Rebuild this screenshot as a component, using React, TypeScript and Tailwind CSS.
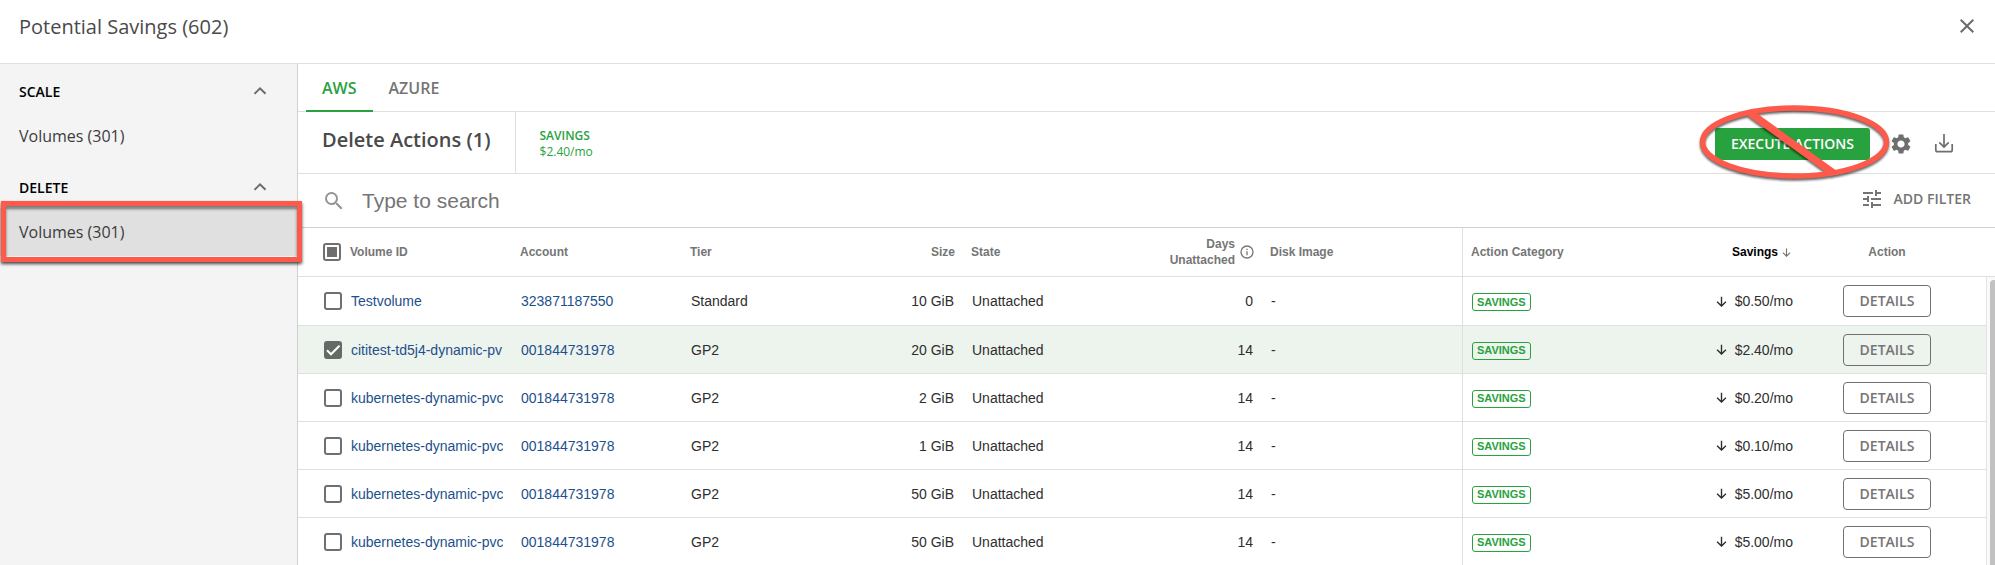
import { useState } from "react";
import { MdClose, MdSearch, MdSettings, MdTune } from "react-icons/md";

type Volume = {
  id: string;
  account: string;
  tier: string;
  size: string;
  days: number;
  savings: string;
};

const volumes: Volume[] = [
  { id: "Testvolume", account: "323871187550", tier: "Standard", size: "10 GiB", days: 0, savings: "$0.50/mo" },
  { id: "cititest-td5j4-dynamic-pv", account: "001844731978", tier: "GP2", size: "20 GiB", days: 14, savings: "$2.40/mo" },
  { id: "kubernetes-dynamic-pvc", account: "001844731978", tier: "GP2", size: "2 GiB", days: 14, savings: "$0.20/mo" },
  { id: "kubernetes-dynamic-pvc", account: "001844731978", tier: "GP2", size: "1 GiB", days: 14, savings: "$0.10/mo" },
  { id: "kubernetes-dynamic-pvc", account: "001844731978", tier: "GP2", size: "50 GiB", days: 14, savings: "$5.00/mo" },
  { id: "kubernetes-dynamic-pvc", account: "001844731978", tier: "GP2", size: "50 GiB", days: 14, savings: "$5.00/mo" },
];

function ChevronUp() {
  return (
    <svg viewBox="0 0 14 14" className="size-[14px]" fill="none" stroke="#6b6b6b" strokeWidth="2" aria-hidden="true">
      <path d="M1.500 8.800 7 3.300l5.500 5.500" />
    </svg>
  );
}

function ArrowDown({ className }: { className: string }) {
  return (
    <svg viewBox="0 0 12 12" className={className} fill="none" stroke="currentColor" strokeWidth="1.500" aria-hidden="true">
      <path d="M6 .8v10M1.200 6.200 6 11l4.800-4.800" />
    </svg>
  );
}

function Checkbox({ label, checked, mixed, onChange }: { label: string; checked: boolean; mixed?: boolean; onChange: () => void }) {
  return (
    <label className="relative block size-[18px]">
      <input
        type="checkbox"
        aria-label={label}
        checked={checked}
        onChange={onChange}
        className="block size-[18px] appearance-none rounded-[3px] border-2 border-[#707070] bg-white checked:border-[#646b66] checked:bg-[#646b66]"
      />
      {mixed && <span className="pointer-events-none absolute inset-1 bg-[#6e6e6e]" />}
      {checked && (
        <svg viewBox="0 0 18 18" className="pointer-events-none absolute inset-0" fill="none" stroke="#fff" strokeWidth="2" aria-hidden="true">
          <path d="m3 9.300 4 4L15.500 4.800" />
        </svg>
      )}
    </label>
  );
}

function SidebarSection({ title, active }: { title: string; active?: boolean }) {
  return (
    <section>
      <button type="button" className="flex h-12 w-full items-center justify-between pt-2 pr-[30px] pl-[19px] text-sm font-semibold text-black">
        {title}
        <ChevronUp />
      </button>
      <a href="#volumes" className={active ? "relative flex h-12 items-center bg-[#e0e0e0] pl-[19px] text-base" : "relative flex h-12 items-center pl-[19px] text-base"}>
        Volumes (301)
        {active && (
          <span className="pointer-events-none absolute -top-[7px] -right-[5px] -bottom-[6px] left-px z-10 border-5 border-[#fd5a4b] shadow-[0_2px_3px_rgba(0,0,0,0.7),inset_0_3px_3px_rgba(0,0,0,0.5)]" />
        )}
      </a>
    </section>
  );
}

function ProhibitedMark() {
  return (
    <svg viewBox="0 0 200 86" className="pointer-events-none absolute -top-7 -right-[26px] z-10 h-[86px] w-[200px] max-w-none drop-shadow-[0_2px_1px_rgba(0,0,0,0.6)]" fill="none" stroke="#fd5a4b" aria-hidden="true">
      <path d="M54 13 138 73.500" strokeWidth="7.500" />
      <ellipse cx="98.500" cy="42" rx="92" ry="34" strokeWidth="5.500" />
    </svg>
  );
}

export default function App() {
  const [selected, setSelected] = useState<number[]>([1]);
  const toggle = (index: number) =>
    setSelected((current) => (current.includes(index) ? current.filter((i) => i !== index) : [...current, index]));

  return (
    <div className="flex h-screen flex-col overflow-hidden bg-white font-['Open_Sans',sans-serif] text-[#3c3c3c]">
      <header className="flex h-16 shrink-0 items-start justify-between border-b border-[#dfdfdf] pt-[13px] pr-4 pl-[19px]">
        <h1 className="text-xl leading-7 text-[#4a4a4a]">Potential Savings (602)</h1>
        <button type="button" aria-label="Close" className="pt-px text-[#6b6b6b]">
          <MdClose className="size-6" />
        </button>
      </header>

      <div className="flex min-h-0 flex-1">
        <nav className="w-[298px] shrink-0 border-r border-[#cfcfcf] bg-[#f4f4f4]">
          <SidebarSection title="SCALE" />
          <SidebarSection title="DELETE" active />
        </nav>

        <main className="flex min-w-0 flex-1 flex-col">
          <div role="tablist" className="flex h-12 shrink-0 border-b border-[#dfdfdf] pl-2 text-base font-semibold">
            <button type="button" role="tab" aria-selected="true" className="-mb-px border-b-2 border-[#28a23e] px-4 pt-0.5 text-[#28a23e]">
              AWS
            </button>
            <button type="button" role="tab" aria-selected="false" className="px-4 pt-px text-[#757575]">
              AZURE
            </button>
          </div>

          <div className="flex h-[62px] shrink-0 items-stretch border-b border-[#dfdfdf] pr-[39px]">
            <h2 className="flex items-center border-r border-[#dfdfdf] pr-6 pb-1.5 pl-6 text-xl font-semibold text-[#4a4a4a]">Delete Actions (1)</h2>
            <div className="flex flex-col justify-center pt-0.5 pl-6 text-xs text-[#28a23e]">
              <span className="font-semibold">SAVINGS</span>
              <span>$2.40/mo</span>
            </div>
            <div className="ml-auto flex items-center gap-[19px] pt-0.5 text-[#6e6e6e]">
              <div className="relative">
                <button type="button" className="h-8 rounded-[3px] bg-[#28a23e] px-4 text-sm font-semibold text-white">
                  EXECUTE ACTIONS
                </button>
                <ProhibitedMark />
              </div>
              <button type="button" aria-label="Settings">
                <MdSettings className="size-6" />
              </button>
              <button type="button" aria-label="Download">
                <svg viewBox="0 0 24 24" className="size-6" fill="none" stroke="currentColor" strokeWidth="1.700" aria-hidden="true">
                  <path d="M12 2v12.500M7.300 10.300 12 15l4.700-4.700M3.800 12v6q0 1.700 1.700 1.700h13q1.700 0 1.700-1.700v-6" />
                </svg>
              </button>
            </div>
          </div>

          <div className="flex h-[54px] shrink-0 items-center border-b border-[#cfcfcf] px-6">
            <label htmlFor="search" aria-label="Search" className="text-[#949494]">
              <MdSearch className="size-6" />
            </label>
            <input
              id="search"
              type="text"
              placeholder="Type to search"
              className="ml-4 min-w-0 flex-1 font-['Liberation_Sans',sans-serif] text-[21px] outline-none placeholder:text-[#757575]"
            />
            <button type="button" className="flex items-center gap-[10px] pb-1 text-sm font-semibold text-[#757575]">
              <MdTune className="size-6" />
              ADD FILTER
            </button>
          </div>

          <div className="flex min-h-0 flex-1 overflow-hidden font-['Liberation_Sans',sans-serif]">
            <div className="min-w-0 flex-1">
              <table className="w-full table-fixed border-separate border-spacing-0 text-left text-sm text-[#2e2e2e]">
                <colgroup>
                  <col className="w-11" />
                  <col className="w-[170px]" />
                  <col className="w-[170px]" />
                  <col className="w-[170px]" />
                  <col className="w-[111px]" />
                  <col className="w-[170px]" />
                  <col className="w-[129px]" />
                  <col />
                  <col className="w-[170px]" />
                  <col className="w-[170px]" />
                  <col className="w-[170px]" />
                  <col className="w-[14px]" />
                </colgroup>
                <thead className="text-xs text-[#757575] [&_th]:h-[49px] [&_th]:border-b [&_th]:border-[#dfdfdf] [&_th]:px-2 [&_th]:py-0">
                  <tr>
                    <th>
                      <div className="ml-[17px]">
                        <Checkbox label="Select all" checked={false} mixed={selected.length > 0} onChange={() => setSelected([])} />
                      </div>
                    </th>
                    <th>Volume ID</th>
                    <th>Account</th>
                    <th>Tier</th>
                    <th className="text-right">Size</th>
                    <th>State</th>
                    <th>
                      <div className="flex items-center justify-end gap-[5px] text-right">
                        <span>
                          Days
                          <br />
                          Unattached
                        </span>
                        <svg viewBox="0 0 14 14" className="size-[14px]" fill="none" stroke="currentColor" strokeWidth="1.300" aria-hidden="true">
                          <circle cx="7" cy="7" r="6" />
                          <path d="M7 6.200v4M7 3.700v1.300" />
                        </svg>
                      </div>
                    </th>
                    <th>Disk Image</th>
                    <th className="border-l">Action Category</th>
                    <th className="text-black">
                      <div className="flex items-center justify-end gap-1 pr-[3px]">
                        Savings
                        <ArrowDown className="size-[9px] text-[#757575]" />
                      </div>
                    </th>
                    <th className="text-center">Action</th>
                    <th aria-hidden="true" />
                  </tr>
                </thead>
                <tbody className="[&_td]:h-12 [&_td]:border-b [&_td]:border-[#dfdfdf] [&_td]:px-[9px] [&_td]:py-0 [&_tr:first-child_td]:h-[49px]">
                  {volumes.map((volume, index) => (
                    <tr key={index} className={selected.includes(index) ? "bg-[#edf3ed]" : "bg-white"}>
                      <td>
                        <div className="ml-[17px]">
                          <Checkbox label={`Select ${volume.id}`} checked={selected.includes(index)} onChange={() => toggle(index)} />
                        </div>
                      </td>
                      <td>
                        <a href="#volume" className="block overflow-hidden whitespace-nowrap text-[#1d4f8c]">
                          {volume.id}
                        </a>
                      </td>
                      <td>
                        <a href="#account" className="text-[#1d4f8c]">
                          {volume.account}
                        </a>
                      </td>
                      <td>{volume.tier}</td>
                      <td className="text-right">{volume.size}</td>
                      <td>Unattached</td>
                      <td className="text-right">{volume.days}</td>
                      <td>-</td>
                      <td className="border-l">
                        <span className="inline-flex h-[18px] items-center rounded-[3px] border border-[#28a23e] px-1 text-[11px] font-bold text-[#28a23e]">SAVINGS</span>
                      </td>
                      <td>
                        <div className="flex items-center justify-end gap-2">
                          <ArrowDown className="size-[11px]" />
                          {volume.savings}
                        </div>
                      </td>
                      <td className="text-center">
                        <button type="button" className="h-8 w-[88px] rounded-[4px] border border-[#707070] font-['Open_Sans',sans-serif] font-semibold text-[#757575]">
                          DETAILS
                        </button>
                      </td>
                      <td aria-hidden="true" />
                    </tr>
                  ))}
                </tbody>
              </table>
            </div>
            <div className="flex w-[9px] shrink-0 flex-col">
              <div className="h-[49px] shrink-0 border-b border-[#dfdfdf]" />
              <div className="flex-1 border-l border-[#e4e4e4] bg-[#fafafa] pt-[3px] pl-[3px]">
                <div className="h-full rounded-tl-[4px] bg-[#c1c1c1]" />
              </div>
            </div>
          </div>
        </main>
      </div>
    </div>
  );
}
